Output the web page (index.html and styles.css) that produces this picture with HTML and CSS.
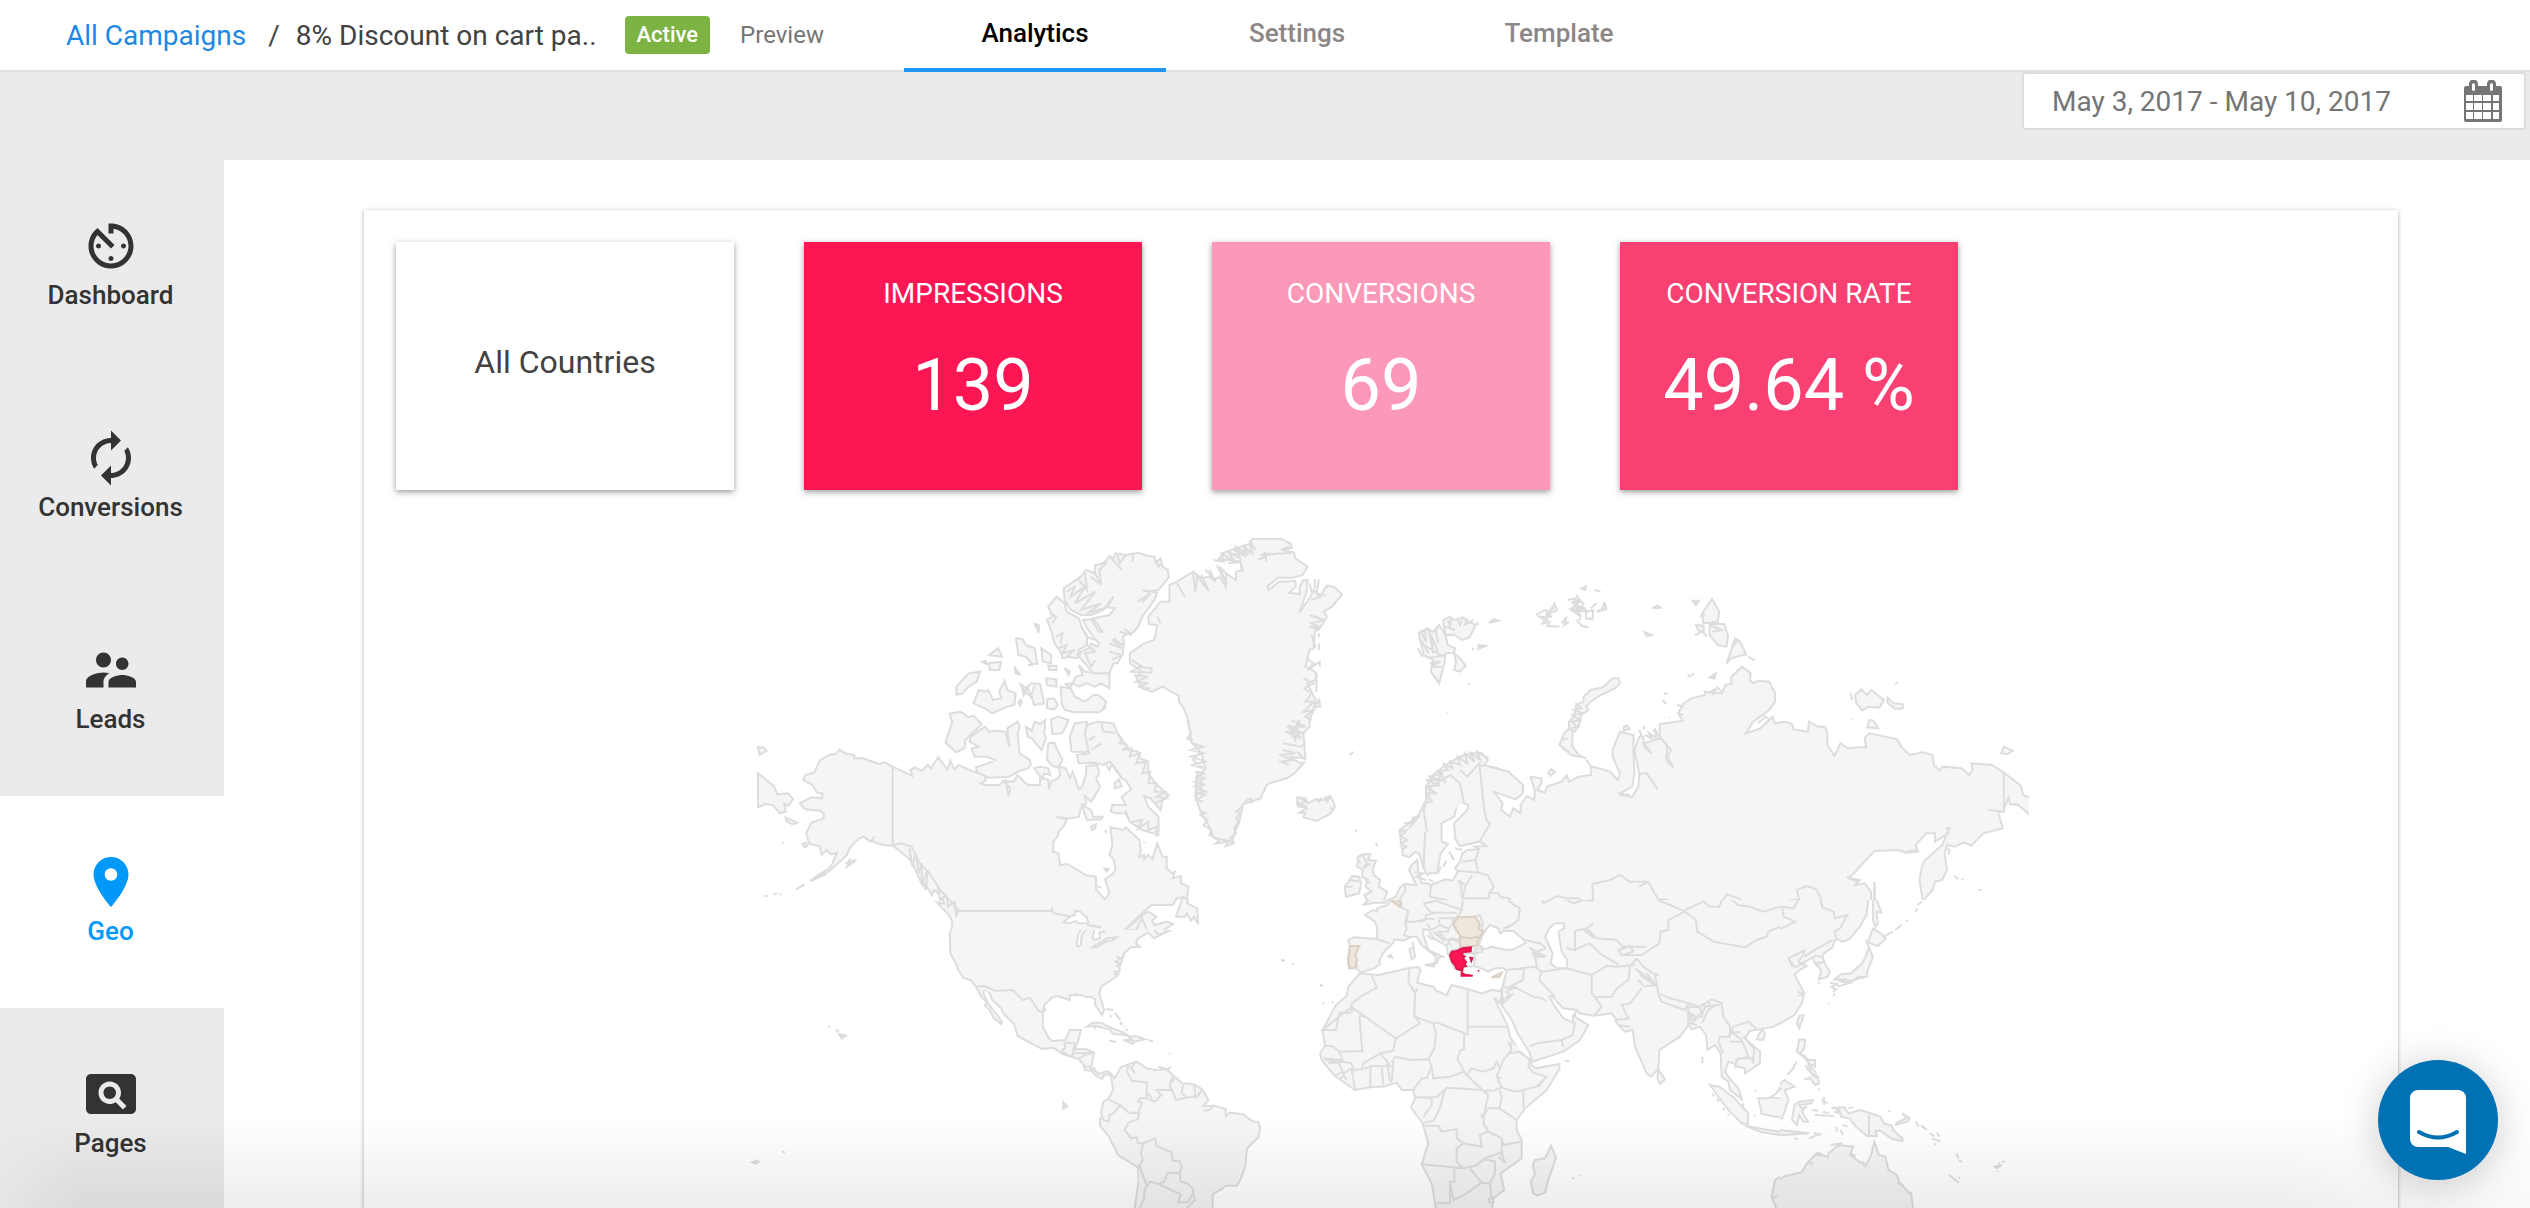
FILE: index.html
```html
<!DOCTYPE html>
<html lang="en">
<head>
<meta charset="utf-8">
<title>Campaign analytics - Geo</title>
<meta name="viewport" content="width=device-width, initial-scale=1">
<link rel="stylesheet" href="styles.css">
</head>
<body>
<div class="app">
  <header class="topbar">
    <div class="crumbs">
      <a class="crumb-link" href="#campaigns">All Campaigns</a>
      <span class="crumb-sep">/</span>
      <span class="crumb-name">8% Discount on cart pa..</span>
      <span class="badge">Active</span>
      <a class="preview" href="#preview">Preview</a>
    </div>
    <nav class="tabs" aria-label="Campaign sections">
      <a class="tab tab-active" href="#analytics">Analytics</a>
      <a class="tab" href="#settings">Settings</a>
      <a class="tab" href="#template">Template</a>
    </nav>
  </header>

  <div class="toolbar">
    <label class="date-range">
      <input class="date-input" type="text" value="May 3, 2017 - May 10, 2017" aria-label="Date range">
      <svg class="calendar" viewBox="0 0 38 42" aria-hidden="true">
        <path fill="#757575" fill-rule="evenodd" d="M2 6H5V4A4 4 0 0 1 14 4V6H23V4A4 4 0 0 1 32 4V6H36A2 2 0 0 1 38 8V40A2 2 0 0 1 36 42H2A2 2 0 0 1 0 40V8A2 2 0 0 1 2 6ZM2 15V21H9V15ZM10 15V21H18V15ZM19 15V21H27V15ZM29 15V21H35V15ZM2 23V30H9V23ZM10 23V30H18V23ZM19 23V30H27V23ZM29 23V30H35V23ZM2 32V39H9V32ZM10 32V39H18V32ZM19 32V39H27V32ZM29 32V39H35V32ZM8 4V10A2 2 0 0 0 11 10V4A2 2 0 0 0 8 4ZM26 4V10A2 2 0 0 0 29 10V4A2 2 0 0 0 26 4Z"/>
      </svg>
    </label>
  </div>

  <div class="body">
    <nav class="sidebar" aria-label="Reports">
      <a class="side-item" href="#dashboard">
        <svg class="side-icon" viewBox="0 0 24 24" aria-hidden="true"><path d="M11 17c0 .55.45 1 1 1s1-.45 1-1-.45-1-1-1-1 .45-1 1zm0-14v4h2V5.08c3.39.49 6 3.39 6 6.92 0 3.87-3.13 7-7 7s-7-3.13-7-7c0-1.68.59-3.22 1.58-4.42L12 13l1.41-1.41-6.8-6.8v.02C4.42 6.45 3 9.05 3 12c0 4.97 4.02 9 9 9 4.97 0 9-4.03 9-9s-4.03-9-9-9h-1zm7 9c0-.55-.45-1-1-1s-1 .45-1 1 .45 1 1 1 1-.45 1-1zM6 12c0 .55.45 1 1 1s1-.45 1-1-.45-1-1-1-1 .45-1 1z"/></svg>
        <span>Dashboard</span>
      </a>
      <a class="side-item" href="#conversions">
        <svg class="side-icon" viewBox="0 0 24 24" aria-hidden="true"><path d="M12 6v3l4-4-4-4v3c-4.42 0-8 3.58-8 8 0 1.57.46 3.03 1.24 4.26L6.7 14.8c-.45-.83-.7-1.79-.7-2.8 0-3.31 2.69-6 6-6zm6.76 1.74L17.3 9.2c.44.84.7 1.79.7 2.8 0 3.31-2.69 6-6 6v-3l-4 4 4 4v-3c4.42 0 8-3.58 8-8 0-1.57-.46-3.03-1.24-4.26z"/></svg>
        <span>Conversions</span>
      </a>
      <a class="side-item" href="#leads">
        <svg class="side-icon" viewBox="0 0 24 24" aria-hidden="true"><path d="M16.5 12c1.38 0 2.49-1.12 2.49-2.5S17.88 7 16.5 7C15.12 7 14 8.12 14 9.5s1.12 2.5 2.5 2.5zM9 11c1.66 0 2.99-1.34 2.99-3S10.66 5 9 5C7.34 5 6 6.34 6 8s1.34 3 3 3zm7.5 3c-1.83 0-5.5.92-5.5 2.75V19h11v-2.25c0-1.83-3.67-2.75-5.5-2.75zM9 13c-2.33 0-7 1.17-7 3.5V19h7v-2.25c0-.85.33-2.34 2.37-3.47C10.5 13.1 9.66 13 9 13z"/></svg>
        <span>Leads</span>
      </a>
      <a class="side-item side-active" href="#geo">
        <svg class="side-icon" viewBox="0 0 24 24" aria-hidden="true"><path d="M12 2C8.13 2 5 5.13 5 9c0 5.25 7 13 7 13s7-7.75 7-13c0-3.87-3.13-7-7-7zm0 9.5c-1.38 0-2.5-1.12-2.5-2.5s1.12-2.5 2.5-2.5 2.5 1.12 2.5 2.5-1.12 2.5-2.5 2.5z"/></svg>
        <span>Geo</span>
      </a>
      <a class="side-item" href="#pages">
        <svg class="side-icon" viewBox="0 0 24 24" aria-hidden="true"><path d="M11.5 9C10.12 9 9 10.12 9 11.5s1.12 2.5 2.5 2.5 2.5-1.12 2.5-2.5S12.88 9 11.5 9zM20 4H4c-1.1 0-2 .9-2 2v12c0 1.1.9 2 2 2h16c1.1 0 2-.9 2-2V6c0-1.1-.9-2-2-2zm-3.21 14.21l-2.91-2.91c-.69.44-1.51.7-2.39.7C9.01 16 7 13.99 7 11.5S9.01 7 11.5 7 16 9.01 16 11.5c0 .88-.26 1.69-.7 2.39l2.91 2.9-1.42 1.42z"/></svg>
        <span>Pages</span>
      </a>
    </nav>

    <main class="content">
      <section class="card">
        <div class="tiles">
          <div class="tile tile-scope">All Countries</div>
          <div class="tile tile-impressions"><span class="tile-label">IMPRESSIONS</span><span class="tile-value">139</span></div>
          <div class="tile tile-conversions"><span class="tile-label">CONVERSIONS</span><span class="tile-value">69</span></div>
          <div class="tile tile-rate"><span class="tile-label">CONVERSION RATE</span><span class="tile-value">49.64 %</span></div>
        </div>

        <svg class="map" viewBox="733 538 1296 670" role="img" aria-label="Conversions by country">
          <!-- North America, Greenland, Iceland -->
          <svg x="740" y="520" width="603" height="410" viewBox="0 0 1477 1230" preserveAspectRatio="none">
            <path d="M505,1300 515,1260 520,1205 512,1185 482,1147 500,1152 495,1130 475,1110 470,1125 445,1075 448,1100 430,1050 418,1020 398,1000 375,977 350,975 328,966 318,955 305,950 292,955 283,965 268,985 262,1005 240,1030 220,1052 172,1083 190,1066 215,1048 225,1035 238,998 222,1003 212,990 200,1005 195,978 170,972 162,940 175,908 205,895 205,880 195,872 160,868 146,850 175,832 200,835 202,820 188,818 178,795 155,780 160,765 182,757 195,722 218,705 235,702 243,688 258,700 280,706 280,715 300,714 340,732 355,727 374,740 422,768 418,750 428,742 445,752 460,735 468,745 485,712 500,735 508,748 515,722 525,748 535,735 575,757 598,762 603,780 590,790 600,795 635,795 650,780 658,828 662,805 645,782 670,785 680,765 700,790 708,795 735,795 735,770 755,780 757,808 762,785 778,775 785,765 780,740 798,745 808,775 815,755 830,808 838,800 848,760 848,738 875,735 880,760 872,775 882,800 868,830 860,845 845,828 848,850 835,865 830,890 812,895 800,895 775,890 800,900 795,915 780,935 780,945 768,965 766,995 780,1000 784,1035 802,1032 848,1066 872,1070 872,1108 893,1138 905,1120 894,1078 915,1060 920,1045 915,1018 905,1005 912,975 910,950 907,922 940,930 945,922 978,960 982,990 978,1010 990,1005 990,1018 1000,1005 1010,1018 1022,970 1035,1010 1045,1010 1045,1045 1058,1060 1065,1055 1060,1075 1080,1068 1080,1090 1098,1100 1095,1135 1070,1135 1060,1155 1008,1155 985,1180 940,1232 965,1208 985,1185 1000,1175 1020,1190 1010,1200 1015,1215 1045,1205 1060,1212 1015,1250 975,1255 970,1300Z"/>
            <path d="M374,740V975L395,970 420,980 440,1030 465,1060 490,1110 535,1170M535,1173H765L763,1162 768,1180 815,1190M850,1215 885,1222M940,1232 970,1230 985,1195 1000,1240M415,985 422,1040 430,1000 438,1060 445,1030 445,1090 460,1050 455,1110 448,1080M485,1100 490,1140 505,1125 510,1160 525,1145 530,1190 535,1165"/>
            <path class="sea" d="M793,1207 808,1190 820,1185 820,1172 835,1175 838,1182 850,1192 853,1210 830,1210 822,1203 805,1210Z"/>
            <path d="M1068,1190 1085,1130 1098,1140 1095,1150 1120,1165 1122,1212 1112,1190 1105,1202 1095,1180 1090,1190Z"/>
            <path d="M44,760 82,797 92,823 118,820 130,837 118,858 108,850 112,875 98,880 80,855 62,852 44,862ZM44,682 57,682 65,692 48,704ZM112,893 140,908 130,913 115,905ZM103,966 107,970M153,972 162,968 165,978 158,982ZM60,1127 68,1129M82,1124 92,1120M97,1122 102,1124M138,1108 158,1093M172,1083 212,1062M258,1030 285,1020 262,1040 270,1015M300,948 320,965 330,950"/>
            <!-- Banks, Victoria and the parallel islands -->
            <path d="M513,581 540,575 560,592 572,587 592,613 552,660 550,684 530,697 503,667 520,607Z"/>
            <path d="M565,650 600,620 610,635 628,632 650,635 660,680 655,625 680,605 685,620 680,640 685,700 710,720 712,735 705,745 680,755 660,770 610,773 580,757 578,742 612,728 625,720 605,710 575,710 567,685 585,680 562,665Z"/>
            <path d="M700,620 715,632 722,605 735,612 748,600 745,640 750,655 738,690 715,655 705,650ZM762,598 780,590 805,600 790,640 765,642ZM755,670 770,668 775,685 790,720 780,742 765,738 752,720ZM720,745 735,740 755,745 760,765 745,760 740,775ZM808,650 820,610 850,605 845,640 855,690 845,697 812,695Z"/>
            <path d="M572,550 585,510 600,515 608,510 620,540 640,535 635,515 648,482 655,510 675,520 672,555 655,560 618,580 600,565ZM530,500 560,460 588,455 580,485 560,500 545,520 530,525ZM610,405 632,385 642,410ZM610,430 640,425 635,450 612,450ZM593,425 602,422 605,432ZM676,355 692,357 700,375 722,385 728,432 715,432 700,410 682,405ZM738,385 762,405 762,430 742,425ZM722,312 732,315 732,338ZM672,440 685,463 675,460ZM705,435 718,436M755,437 775,438 775,450 758,450ZM795,445 808,455 805,465ZM750,475 775,478 775,500 752,495ZM685,490 700,505 715,490 735,492 745,550 720,555 715,530 700,520ZM752,538 770,535 778,555 770,568 752,565ZM682,545 688,540 690,550 685,557ZM690,500 695,525 705,500 712,530 722,495"/>
            <path d="M785,500 810,505 820,530 845,545 865,525 878,525 897,545 890,565 897,560 880,577 820,577 795,570 788,550Z"/>
            <path d="M798,492 815,490 822,470 840,465 830,435 845,455 875,460 905,458 905,505 885,490 868,500 850,490 830,500 815,490 808,505Z"/>
            <!-- Ellesmere and Axel Heiberg -->
            <path d="M793,205 835,170 848,150 868,160 870,135 890,130 905,108 915,115 920,100 945,105 975,98 1000,108 1015,110 1018,128 1030,115 1035,140 1048,150 1050,172 1025,210 1000,215 985,210 1022,218 1015,240 985,290 975,320 965,335 945,345 938,350 940,370 938,400 925,430 915,430 905,460 865,460 845,430 830,410 835,395 855,385 860,370 875,380 880,370 865,350 850,325 840,300 860,298 880,335 888,335 865,295 905,285 918,265 900,262 915,230 890,270 860,285 835,285 810,270 795,240Z"/>
            <path d="M755,260 775,230 795,250 800,275 830,295 840,330 850,345 850,375 830,390 825,415 805,410 790,415 785,395 770,370 762,330 752,300 765,290Z"/>
            <path class="rough" d="M868,155 885,195 880,150 900,125M905,108 935,150M925,105 930,130 945,105M800,215 820,200 810,230 845,200 820,250 870,215 835,270 885,250 850,280 900,262M830,180 850,210 845,160M860,170 878,190M962,98V125M975,245 1005,220 985,248M1020,120 1025,140 1032,130M940,325 960,345 930,335M915,355 938,375 912,360 935,385 905,370M905,395 935,405 910,420M850,375 870,395 845,400 860,440 870,420M760,280 775,290 765,310M775,350 790,340 785,370M780,385 800,375 790,400 820,390 800,410M835,320 850,350 870,360"/>
            <!-- Baffin Island -->
            <path d="M845,640 850,615 875,605 915,610 925,640 935,655 930,670 945,672 950,690 975,695 980,715 1000,725 1000,760 1015,785 1035,810 1050,825 1035,840 1030,870 1005,835 990,828 1000,860 1025,890 1025,945 985,930 955,905 945,880 920,880 908,875 912,855 945,855 935,830 958,808 945,780 935,775 920,745 905,725 890,735 870,728 830,730 825,705 855,700Z"/>
            <path class="rough" d="M885,610 890,635 920,638M925,645 950,680 935,690 960,685 955,710 980,700 970,730 995,725 985,760 1005,755 1000,790 1020,790 1015,815 1045,815 1020,830 1045,835 1015,850M990,830 1010,835M960,905 985,900 975,925 1000,905 1000,930 1020,920 1020,950M945,870 950,895M855,660 870,650M860,690 885,670M895,730 905,750 910,730 925,760"/>
            <path d="M918,790 928,778 935,800 918,805ZM838,855 860,870 865,890 888,890 885,898 850,900 845,885ZM860,920 872,913 870,925 862,930ZM895,930 897,940M990,965V970M893,1045 903,1048 897,1055ZM873,1098 885,1103"/>
            <!-- Greenland -->
            <path d="M1255,56 1325,56 1350,72 1352,84 1330,90 1357,98 1360,115 1390,140 1378,165 1355,173 1318,173 1293,198 1295,210 1320,185 1360,183 1362,200 1345,218 1372,222 1370,205 1378,182 1390,180 1388,215 1370,278 1395,235 1405,210 1420,230 1438,197 1455,200 1475,223 1450,260 1430,275 1438,290 1420,325 1408,335 1405,385 1395,390 1385,440 1402,450 1412,460 1410,480 1390,490 1410,540 1405,570 1395,600 1395,620 1380,640 1385,715 1345,710 1370,728 1382,728 1358,760 1340,775 1300,788 1290,795 1275,835 1232,852 1222,910 1212,935 1205,970 1195,962 1162,955 1145,910 1130,880 1115,830 1118,775 1140,745 1130,700 1105,665 1098,600 1085,560 1075,545 1075,528 1035,500 1010,515 985,505 970,470 985,455 955,430 955,400 990,370 1015,360 1022,315 1002,312 1000,290 1030,245 1052,245 1052,195 1070,185 1110,155 1130,175 1150,170 1160,180 1175,170 1190,200 1190,160 1215,180 1215,155 1230,150 1225,125 1200,120 1172,118 1185,98 1215,85 1250,70Z"/>
            <path class="rough" d="M1070,190 1090,230M1110,160 1115,215 1120,170 1148,212 1130,165M1140,148 1165,185 1150,150M1168,135 1192,195 1175,140 1195,165M1160,120 1185,125 1180,100 1215,130 1195,95 1225,115 1215,80 1245,105 1230,75 1255,100 1248,62 1262,90M1195,130 1225,125 1232,155M1200,105 1250,95 1210,90 1240,110M1270,120 1300,100 1275,105 1350,98M1285,95 1290,125M1325,90 1345,80M1395,190 1400,215M1408,178V205M1418,178 1412,220 1430,225 1400,240M1395,285 1430,300 1400,310 1420,320 1395,320 1420,330M1418,340V352M1400,345 1410,385M1418,370V390M1388,415 1405,430 1390,450 1420,425V440M1380,475 1405,490 1382,505 1400,520 1385,545 1405,545 1380,575 1405,570 1385,590 1400,600M1412,465V515M1418,540 1410,560 1422,560ZM1350,600 1385,620 1340,620 1380,640 1335,635 1375,655 1345,615 1360,660 1370,600 1350,650M1330,670 1375,680 1385,670M1330,690 1360,700 1325,705 1350,720 1325,725 1345,735M1365,695 1385,720M960,420 985,440 955,455 1008,458 1008,445 975,440M965,465 1000,470 970,485 1000,490 975,500 1005,505M1022,290 1030,310M1095,600 1105,640 1095,655 1110,660M1105,670 1135,680 1105,690 1135,700 1105,710 1140,725 1105,735 1135,745 1110,720 1125,700M1115,755 1140,760 1115,770 1142,775 1115,785 1140,795 1115,800 1142,815 1115,820 1138,825 1118,840 1135,845M1120,760V830M1130,760V820M1125,870 1140,880 1128,885 1145,900 1135,915 1155,930 1150,945 1175,960 1165,970 1195,965 1190,978 1210,970 1200,955 1215,940 1210,925 1222,905 1215,895 1225,880 1215,875 1230,860M1235,845 1250,835 1255,850"/>
            <!-- Iceland -->
            <path d="M1365,832 1385,835 1390,850 1410,838 1430,840 1445,828 1455,850 1457,862 1445,882 1412,903 1380,892 1385,878 1370,878 1388,865 1365,855Z"/>
            <path class="rough" d="M1368,832 1388,845 1368,850 1388,860 1365,860M1412,833 1418,845 1425,833M1432,828 1438,845 1448,828M1445,862 1455,868"/>
            <path d="M1495,705 1502,695M1510,930 1514,934"/>
          </svg>

          <!-- Scandinavia, Russia and the Arctic islands -->
          <svg x="1343" y="520" width="686" height="380" viewBox="88.7 0 1415.3 1140" preserveAspectRatio="none">
            <path d="M150,1300 178,1142 198,1130 205,1105 215,1092 240,1095 225,1050 230,1035 242,1020 244,1055 250,1090 262,1090 270,1095 300,1078 315,1082 325,1055 320,1045 330,1025 335,1000 345,990 368,988 360,980 385,978 370,965 330,978 320,955 318,910 345,870 348,855 335,848 325,852 318,890 292,910 292,965 305,972 290,1000 285,1040 282,1060 268,1060 263,1065 255,1045 248,1010 245,1000 238,995 225,1012 212,1005 208,965 205,930 225,910 245,885 260,840 260,800 278,760 300,735 330,710 355,700 375,700 388,720 380,735 430,755 460,795 460,820 445,838 400,815 418,850 415,870 433,890 440,865 455,880 455,855 468,828 483,840 485,815 480,790 475,770 498,775 498,790 490,810 505,818 510,800 540,785 550,765 555,785 575,770 600,765 600,738 640,755 655,780 660,760 645,710 645,690 660,635 688,645 688,700 690,760 685,800 660,820 685,832 698,800 700,760 690,690 700,650 708,650 710,680 725,700 710,670 730,660 745,655 758,680 755,720 770,742 758,712 765,690 742,650 742,612 790,602 780,580 792,550 808,535 835,525 835,515 870,520 878,495 890,492 890,470 912,440 930,460 928,480 935,490 945,482 968,485 980,520 980,545 968,570 935,605 920,640 950,625 975,590 980,610 1000,605 1015,612 1018,628 1048,635 1050,605 1068,620 1083,620 1088,640 1088,675 1103,708 1115,670 1130,685 1155,682 1168,682 1165,652 1175,640 1232,658 1240,680 1258,705 1285,697 1305,705 1308,735 1320,752 1325,740 1365,745 1380,765 1388,750 1385,730 1428,735 1452,758 1487,797 1492,825 1510,835 1510,890 1482,855 1465,852 1462,832 1450,875 1440,875 1450,925 1410,940 1385,977 1370,967 1350,980 1335,975 1330,1000 1335,1050 1325,1080 1310,1085 1305,1110 1285,1143 1278,1080 1283,1040 1290,1020 1325,975 1340,925 1335,925 1338,940 1310,965 1310,940 1292,940 1270,975 1275,995 1250,998 1235,990 1185,993 1133,1075 1155,1080 1145,1095 1165,1090 1178,1115 1178,1150 1165,1300Z"/>
            <path d="M1452,758V875L1420,870M285,1060 290,1040M262,935 255,870 270,800 310,765 330,790 338,845M255,1045 258,935M330,750 345,770 370,730 375,800 380,870 385,900 392,912 370,965M370,735 380,740M370,985 362,1020 335,1025M362,1020 368,1058 325,1052M368,1058 387,1065 400,1100 390,1120 408,1120 415,1132 432,1135 440,1148M390,1120V1135H335L342,1095 325,1082M342,1095 355,1065M335,1135 330,1080M270,1095 268,1130 335,1150M215,1092 218,1110 205,1140M500,1150 530,1128 550,1135 575,1135 580,1145 605,1140 603,1092 640,1080 660,1065 680,1085 718,1085 740,1140 755,1138 765,1150 800,1160 830,1145 870,1150 880,1123 905,1135 920,1150M700,1100 718,1085M1000,1165 1005,1155M1010,1140H1030L1025,1110 1045,1098 1065,1108 1080,1150 1110,1170"/>
            <path class="rough" d="M205,935 220,930 208,950 222,960 208,970 220,980 210,990M215,910 235,905 225,925 245,890 230,895M255,850 272,845 262,820 280,820 262,800 285,795 260,780 290,780 265,770 295,760 280,755 305,750 295,730 315,745 310,725 330,735 325,710 345,730 340,700 360,725 350,695 372,720 365,695 388,715M285,800 290,755 300,790M390,740 410,745M840,520 860,505 850,525M860,500 870,515M778,555 790,560M780,580 790,585M655,820 680,825 660,828M945,610 960,590 970,600 955,585M575,705 590,715M590,718 600,740M725,780 738,808 715,760 700,762M1250,995 1275,990M1335,985 1340,990 1338,1005"/>
            <!-- Novaya Zemlya -->
            <path d="M645,475 657,475 660,490 650,505 620,525 600,545 590,560 595,570 580,585 575,620 562,640 562,680 578,710 560,705 548,690 535,675 545,640 555,625 555,605 565,590 570,555 585,545 585,530 600,510 625,502Z"/>
            <path class="rough" d="M568,550 580,565 565,570 585,580 562,585 578,600 560,605 572,620 555,628 570,635M540,660 552,655M542,685 555,695"/>
            <!-- Svalbard -->
            <path d="M295,302 308,290 320,300 335,292 345,302 362,315 350,352 335,360 318,345 300,345ZM245,340 262,325 275,335 287,315 300,345 305,375 320,385 318,398 300,400 298,430 287,490 270,455 275,420 255,405ZM318,400 330,415 342,437 330,455 318,450 322,425Z"/>
            <path class="rough" d="M248,330 260,365 258,330M265,325 275,400 270,345 285,395M250,360 265,400 255,375 290,405M262,415 300,405M268,430 290,425 270,440 292,440M243,385 253,412M305,300 310,320 312,290M325,300 330,315 335,298M345,295 340,315 358,300M300,320 320,330M366,305V315M280,330 285,370"/>
            <path class="dot" d="M390,308 400,297 410,302ZM368,375 383,378 368,387ZM358,383 356,391M347,490 349,496M302,579 304,581M103,705 110,695M114,929 118,934M157,968 159,978M727,265 738,256 744,263ZM711,336 725,345 715,348ZM810,242 823,242 817,255ZM845,473 858,460 855,475ZM800,462 805,472M812,458 808,468M750,520 760,521M748,540 755,552M762,592V595M1228,492 1234,486M1137,595 1139,598M1136,518 1139,540M925,410 935,420M935,415 937,422"/>
            <!-- Franz Josef Land and Severnaya Zemlya -->
            <path class="rough" d="M487,285 505,270 515,275 525,250 530,270 510,285 520,290 495,290 505,300 500,310 515,305 510,318 535,320M490,288 510,300 508,280 525,262M540,310 550,290 545,315 555,305M552,240 570,235 560,250 580,240 565,260 590,265 560,270 595,275 565,250 580,290 555,265M570,225 580,245M565,235 585,250 575,280 560,262M580,205 590,200 588,210ZM608,210 620,215M590,275 605,270 603,298 590,295ZM600,265 612,250M612,275 625,265 628,245 632,268ZM570,300 582,318 595,322M575,295 580,300"/>
            <path d="M850,237 865,275 862,305 832,310 830,280ZM845,312 875,312 883,345 880,380 862,375 845,345ZM898,355 908,365 920,403 890,415 880,430ZM817,315 833,318 833,335 822,332Z"/>
            <path class="rough" d="M845,315 870,330 850,335M815,345 830,335 840,350M825,290 835,285M890,380 905,360"/>
            <!-- New Siberian and Wrangel islands -->
            <path d="M1145,525 1158,508 1170,525 1178,510 1205,540 1195,563 1172,560 1160,572 1148,550ZM1212,533 1225,550 1245,553 1243,565 1228,567 1212,548ZM1175,600 1183,602 1193,625 1170,622ZM1447,700 1452,680 1470,692 1460,702ZM512,758 518,747 526,755 516,767ZM668,620 675,617 680,627 668,632Z"/>
            <path class="rough" d="M700,630 705,650M712,645 725,655 720,640 735,655 732,625 740,650M710,618V628M728,630 738,640"/>
            <!-- Britain, Ireland, Denmark -->
            <path d="M120,1010 130,1003 145,1003 140,1020 157,1022 150,1045 152,1065 165,1080 163,1100 180,1115 175,1135 160,1160 120,1160 138,1140 133,1125 148,1115 135,1100 140,1080 128,1070 130,1050 118,1040ZM95,1130 92,1100 100,1085 108,1068 122,1070 126,1090 122,1120Z"/>
            <path class="rough" d="M118,1012 125,1030M128,1005 138,1030 130,1045 145,1030M92,1100H108M102,1080 122,1085M135,1080 145,1090M236,1055 255,1060 240,1070 260,1080M265,1078 275,1085M295,1040 302,1022M312,1010 318,1020 308,995M320,985 335,990M1128,1070 1150,1085"/>
            <path d="M1185,1085 1187,1150 1198,1180 1180,1300ZM1350,1067 1358,1078M1365,1075 1368,1080M1400,1110H1406M1338,1000 1340,996"/>
          </svg>

          <!-- USA, Central and South America -->
          <svg x="740" y="930" width="560" height="278" viewBox="0 210 1372 834" preserveAspectRatio="none">
            <path d="M515,150 518,190 514,225 515,280 530,312 533,325 547,353 565,360 578,380 592,412 605,425 600,437 612,450 622,475 640,492 642,485 628,462 608,430 596,400 598,386 610,395 618,420 640,445 645,460 672,492 680,528 740,567 768,563 790,582 830,597 843,615 845,630 862,632 870,645 887,658 890,648 903,640 910,655 914,690 902,718 890,725 885,758 892,762 882,775 882,797 903,828 927,886 975,922 977,960 965,1060 1158,1060 1158,1003 1192,977 1217,977 1225,962 1238,920 1242,866 1270,832 1275,805 1270,787 1255,783 1232,763 1200,758 1190,768 1190,747 1163,737 1135,738 1148,720 1132,688 1113,673 1083,670 1060,645 1045,627 1020,630 995,625 983,613 970,605 933,622 918,655 908,640 900,633 878,642 868,628 860,625 867,578 848,567 820,568 828,545 835,510 808,510 797,540 765,543 757,535 742,500 742,460 745,435 765,412 778,408 808,420 808,406 838,405 848,412 860,410 870,418 870,435 887,465 892,450 880,400 885,380 922,350 918,335 930,335 930,320 942,278 958,262 980,260 970,250 975,235 1000,218 1015,235 1060,205 1070,150Z"/>
            <path d="M578,380 597,378 628,393 668,390 693,420 710,413 732,453 745,458M790,582 790,570 797,565 795,548 820,548M820,548 815,585M790,575 808,590 820,580 865,578M830,597 845,585 867,578M840,620 860,620M862,632 870,622M890,640V655M952,612 948,635 960,662 998,668 995,715M968,605 960,625 965,638M995,715 980,715 975,725 985,728 975,758 952,758 932,735 902,718M932,735 915,760 905,765 903,785 890,780 885,758M952,758 978,760 975,778 952,787 943,810 958,835 972,832 975,850 988,850 1017,835 1020,858 1057,877 1060,903 1077,903 1082,922 1077,938 1047,940 1040,965 1025,972 1005,965 997,978 980,920M988,850 982,880 987,900 975,922M977,915 997,978 990,995 990,1015 978,1050M1025,972 1080,1003 1073,1027 1097,1027 1110,1000V988L1097,970 1080,965 1077,938M1110,1000 1115,1020 1095,1044M995,715 1017,725 1032,705 1020,690 1055,690 1053,672 1060,650M1055,680 1068,720 1095,712 1082,700 1085,675M1095,712 1120,710 1132,688M1113,675 1115,710M1055,670 1065,655M998,700 1010,715"/>
            <path class="sea" d="M828,260 825,255 828,225 838,205 852,203 837,225 835,255ZM857,193 885,200 893,215 880,217 882,235 868,240 863,232 868,215ZM863,262 900,235 922,232 915,240 895,245 875,262Z"/>
            <path class="rough" d="M922,290 932,295 920,305 932,312 920,320M918,340 930,345M745,435 748,455M823,400V408M1015,210 1025,225 1060,208M955,620 968,640M1160,738 1150,750 1135,752"/>
            <path d="M850,500 862,488 885,488 912,505 940,518 948,525 915,522 905,508 870,497ZM940,540 960,540 952,530 970,528 992,538 965,545 962,552ZM905,542 922,546M1000,540 1012,545M866,504 872,503M897,448 915,449M908,465V473M918,458 932,480M932,485 935,495M941,497 943,499M944,508 950,511M1052,580V583M1025,620 1040,625M1045,632 1055,620"/>
            <path class="dot" d="M792,727 802,738 792,746ZM243,522 259,527 249,536ZM235,509 242,515M216,499 221,500M30,907 38,902 46,905 40,911ZM104,874 110,878"/>
            <path class="dot dot-visited" d="M1326,300 1334,302M1353,312 1356,314"/>
          </svg>

          <!-- Europe, Africa, Middle East and South Asia -->
          <svg x="1300" y="900" width="480" height="308" viewBox="0 120 1440 924" preserveAspectRatio="none">
            <path d="M262,100 270,120 262,135 232,145 232,155 218,150 195,165 225,185 232,205 230,237 162,232 145,240 150,258 143,300 148,325 168,325 183,337 222,325 240,312 238,300 252,275 280,248 282,238 310,242 335,230 350,230 365,255 408,290 405,308 410,310 418,292 428,290 385,270 370,225 370,207 385,210 400,235 440,258 443,280 452,300 462,325 485,332 497,310 490,285 512,275 527,282 520,285 525,300 520,318 545,325 565,335 585,325 612,325 620,335 612,360 605,395 598,410 605,435 637,482 650,515 690,580 697,605 790,575 840,540 865,495 825,470 828,455 818,470 820,490 790,475 765,440 748,410 755,408 790,445 832,450 838,460 882,467 935,460 950,480 945,482 955,495 975,515 998,510 1005,560 1040,640 1052,650 1075,628 1078,570 1140,530 1165,495 1175,508 1200,500 1218,525 1222,570 1245,555 1262,580 1265,650 1285,665 1290,690 1325,718 1315,685 1300,668 1285,650 1275,635 1285,605 1300,610 1312,620 1335,625 1335,640 1380,610 1380,575 1335,535 1350,512 1380,508 1420,500 1480,470 1500,430 1540,400 1540,100Z"/>
            <path d="M180,340 235,345 330,323 355,322 362,330 355,350 352,368 400,380 408,392 440,405 455,375 505,388 545,400 575,390 600,393 607,400 600,430 582,412 605,460 622,495 630,530 655,570 690,600 695,615 708,625 778,612 778,628 740,690 675,745 650,780 650,810 665,840 665,895 602,940 612,990 580,1015 575,1060 410,1060 395,970 365,913 385,850 368,790 333,742 345,715 340,690 305,690 290,668 250,680 220,680 165,690 105,648 65,600 60,580 75,558 68,510 108,435 140,408 145,380Z"/>
            <path class="sea" d="M537,255 545,230 558,208 570,195 595,205 600,220 612,212 640,213 672,240 675,250 640,268 618,270 575,260 555,268ZM735,230 748,205 765,190 792,190 792,205 775,215 785,275 802,300 800,325 770,325 752,310 758,280 740,240ZM610,205 635,195 630,200ZM527,268 548,268 545,276 525,278Z"/>
            <!-- African borders -->
            <path d="M215,345 230,383 190,405 155,430V440L68,510H108L118,458H153M153,440 273,525 287,535 360,490 343,468 345,400 325,365 328,325M345,400 352,385M345,470 400,490 408,487 503,523V388M503,500H625M155,440V458M178,468H190M178,468 187,573 118,575 95,558 75,558M118,575 128,600 68,595M287,535 280,572 240,580 190,610 185,628 160,630 155,610 128,605M400,490 408,520 403,565 385,598 330,600 285,590 275,610M240,580 262,605 270,618 215,618 190,628M212,618 210,680M245,618 250,675M262,610 270,665M280,605 275,665M385,598 395,620 380,655 365,655 340,690M492,523V568L480,572 472,595 492,635 450,650 400,655 395,620M492,635 500,645 515,625 550,635 580,625 590,605 600,625 590,650 605,655M625,545 635,570 610,600 600,625M635,545 630,580 658,575 690,600M690,600 685,620 700,638 740,650 710,680 670,690 645,695 605,682 590,650M740,650 715,680M605,682 580,692 550,692 500,645M550,690 440,683 410,712H345M670,690V745M600,690 605,715 598,745 650,780M598,745 555,745 565,705 550,692M555,745 550,790 565,815 605,835 610,855 662,845M440,683 430,705 420,745 400,782 368,790M345,712 395,715 395,735 370,770M368,797 415,797 425,815 470,808V835L490,850 545,860 540,825 565,815M490,850 470,865V905L490,925 365,913M490,925 525,918 555,895 610,875M525,918 555,898 585,905V940L570,970 545,968 510,925M490,920 463,925V965H450V1030L410,1030M450,965 460,1020 500,1000 545,968M570,970 575,1015M565,1020 575,1010 580,1025 570,1028ZM605,835 605,880 615,910 595,890M75,600 115,605 130,640 155,625 165,690M105,648 125,635 140,660M120,655 135,645M545,770 562,750M545,760V775M85,610 130,605"/>
            <!-- European borders -->
            <path d="M230,237 268,250M150,258 178,258 165,285 172,325M270,120 300,140 325,152 315,185 320,205 312,225 330,232M305,100 303,140M325,152 320,185 345,185 370,180 375,175 405,178M370,130 390,155 405,158 470,158M395,90 400,120 485,150 490,105 560,115 575,105M370,130 400,125M485,150 480,160 465,175 415,175M405,158 378,165 375,180 355,185M415,178 420,195 395,210 380,190M420,195 445,205 460,190 455,170M445,205 445,215 415,215 440,240 455,235 478,240 480,215 460,200M440,258 450,240 463,240 480,250 480,265 455,270M455,270 450,280M513,262 530,258 537,262M460,180 480,170M525,170 540,165 550,195 535,200M600,100 635,130 660,145 655,180 635,195 610,205M672,240 720,250 738,265M688,262 710,275 738,265M690,262 705,280 710,320 620,330M705,320 725,335 718,360 765,410M672,325 668,360 620,385 610,378 615,352M620,385 640,380 700,410 725,415 740,425M610,418 630,405 620,395 650,380M605,395 610,430 640,400M603,385 608,430M705,275 740,290M695,280 715,290"/>
            <!-- Asian borders -->
            <path d="M720,100 730,130 770,110 800,120 820,130 850,120 880,122M870,60 885,115 870,120M1075,120 1155,155 1105,180 1105,210 1082,215 1078,250 1025,285 960,285M1155,150 1210,125 1230,140 1258,140 1272,103 1315,135 1350,140 1390,155 1440,140M1155,155 1188,180 1192,215 1240,245 1335,262 1370,240 1400,230 1405,215 1440,200M825,212 860,205 890,235 950,240 968,260 1040,260M825,212V270L800,265M825,268 870,250 905,285 950,310 955,320M955,270 990,258 1000,275 965,285ZM860,205 880,190M845,205 885,235M725,335 800,325 875,345V400L885,412 935,410 950,385 985,360 990,320 1010,295M885,412 905,440 882,467M875,345 920,318 955,320 1005,315M1010,295 1030,320 1065,345 1075,400 1110,415 1165,430 1200,440 1235,418 1265,430 1270,470 1290,500M1025,385 990,430 965,435 985,475 950,480M1075,405 1085,425 1155,450 1165,432M1165,430V495M1170,440 1200,442 1205,458 1190,470 1160,465M1165,480 1205,470 1215,440 1260,435M1205,490 1225,450 1240,440M1290,500 1300,520 1325,540 1345,590 1310,600 1305,625M1300,500 1345,485 1370,508M1290,500 1290,530 1260,530 1255,545 1270,580M1290,545 1325,545M1310,595 1355,595 1360,610M790,475 825,490 818,525 785,540 710,550 690,560M785,540 790,560M1030,380 1065,375M1300,500 1290,520 1320,515M1330,530 1362,565 1360,610"/>
            <path class="rough" d="M1005,325 1025,340M1015,335 1060,365 1040,340 1070,380 1020,345M1065,340 1075,348M1015,360 1030,375M1205,430 1215,440M1225,428 1232,434M1160,455 1180,465 1165,470 1185,480 1170,490 1190,495M955,495 990,500M400,215 430,240 410,220 435,245M380,225 400,240M450,250 455,260M695,270 720,285 700,290 735,290M540,190 550,215M290,105 300,100M195,65 215,100 205,60"/>
            <!-- Aegean Sea -->
            <path class="sea" d="M488,284 512,278 524,284 522,318 500,320 497,305Z"/>
            <!-- Countries with campaign traffic -->
            <path class="visited" d="M150,258 178,258 165,285 172,297 165,323 148,325 145,300ZM275,122 290,117 303,130 300,140ZM460,190 475,172 525,170 537,188V208L550,215 535,238 530,257 480,260 482,228 470,212ZM482,230 510,235 535,230M575,352 605,338 598,352Z"/>
            <path class="dot dot-visited" d="M60,376 68,377"/>
            <path class="top-country" d="M450,285 456,275 470,273 488,265 513,262 512,274 492,276 484,282 494,290 488,294 498,306 494,312 498,318 488,320 487,332 470,327 464,314 456,305ZM485,339 495,344 518,347 485,347ZM511,293 517,294 514,302ZM534,331 537,334"/>
            <!-- Islands -->
            <path d="M185,60 200,80 180,110 200,120 212,115 188,135 222,128 255,128 270,108 262,100 250,60ZM328,268 340,262 345,290 335,298ZM337,245 340,258M375,315 405,310 402,320ZM265,290 272,285 277,293ZM753,857 768,893 745,960 735,998 712,1006 700,1000 692,965 705,942 698,915 705,900 735,895ZM1075,628 1095,658 1080,672 1072,655ZM1208,590 1207,610M795,602 808,603M1230,675 1258,680 1300,712 1345,760 1343,795 1325,790 1290,755 1262,720ZM1335,797 1375,805 1440,815 1440,825 1385,817ZM1375,715 1405,715 1430,700 1440,680 1455,662 1480,680 1465,700 1470,735 1450,770 1425,770 1385,762ZM1405,712 1440,715 1460,690M1385,508 1395,520 1390,540 1370,538ZM1330,730V740M1345,760V765M1362,765 1365,768M1365,690 1368,694M1238,702 1243,708M1250,718 1258,725M1268,745 1275,750M1283,762 1287,767"/>
            <path class="dot" d="M68,428 72,432M95,428 100,426M817,952 822,957M839,945 843,948"/>
            <path d="M1415,1010 1425,960 1440,950 1500,935 1500,1060 1435,1060ZM1418,1020 1430,1005"/>
          </svg>

          <!-- East Asia, Indonesia and Australia -->
          <svg x="1780" y="900" width="249" height="308" viewBox="40.7 120 507 924" preserveAspectRatio="none">
            <path d="M-20,100 222,100 217,165 203,200 182,238 167,245 155,235 150,250 148,262 130,280 127,290 132,310 142,335 138,350 120,358 125,330 115,315 120,308 112,310 107,292 75,320 65,318 58,295 90,272 88,285 78,305 95,318 80,330 70,345 80,370 90,400 85,430 70,465 30,500 -20,507Z"/>
            <path d="M155,235 152,215 163,205 178,165 152,175 150,155 127,142 118,95M75,100 78,120 68,145 45,140 0,150M45,140 48,170 72,185 52,200 20,220 0,250M90,290 120,262 148,240M110,288 128,290M115,312 132,305M60,300 70,320"/>
            <path d="M230,90 240,130 247,158 237,155 240,190 235,200 230,180ZM230,205 250,225 256,235 240,258 220,248ZM222,262 230,292 218,335 218,350 205,352 190,362 152,358 165,343 185,340 208,310 215,290ZM215,240 222,262"/>
            <path class="rough" d="M142,368 160,372 145,380 155,388 148,395M160,362 180,370 158,380M170,355 185,368 200,350 212,355M75,395 90,400 78,408M250,232 270,215M275,210 288,195M297,185 301,180M316,155 320,145M320,135 330,125M150,400 152,408M140,428V432M128,452V454M118,368 122,370"/>
            <path d="M80,468 89,465 80,505 75,490ZM80,538 92,540 90,565 82,580 100,600 112,600 112,620 100,610 88,590 75,575ZM72,610 68,625 55,645M105,640 118,650 120,670 112,675 102,655 90,658"/>
            <path class="rough" d="M90,585 98,605M92,615 105,640 98,610 115,640M95,625 115,655M75,605 72,612M120,685V690"/>
            <path d="M0,710 20,700 50,660 70,680 50,690 58,720 45,775 0,762ZM15,715 45,685M70,735 80,725 108,720 105,730 80,735 85,745 95,740 85,755 98,785 88,785 80,765 75,795 65,780ZM0,803 30,808 100,820 50,825 0,817ZM100,835 125,820M70,835 78,838"/>
            <path class="rough" d="M130,710V735M125,720 138,730M120,690V692M105,750 118,752M112,765 150,768M128,755 140,760M145,745 175,745M150,740 165,760 150,755M180,745 190,742M155,800 157,815M168,795 178,800M165,810 168,825M110,818 122,825"/>
            <path d="M160,742 172,742 180,760 205,750 245,770 252,790 268,797 272,812 290,835 290,843 270,838 245,812 235,812 238,828 218,828 195,800 182,775 165,770ZM222,765V825M275,795 300,785 305,775 290,760 298,775 282,785ZM318,785 322,800M328,797 340,810M345,820 355,828M350,835 368,845M355,850 358,855M360,818 365,830M262,752 266,756"/>
            <path d="M25,1060 22,1005 32,965 52,948 85,937 98,905 118,878 138,892 140,880 160,855 190,860 183,885 215,918 225,890 233,845 242,885 255,890 262,930 278,945 285,970 308,1005 313,1060Z"/>
            <path class="rough" d="M98,905 108,912M110,882 125,888M145,855 165,850 160,862M185,880 195,890M280,970 292,975M300,1000 310,1000M207,905 213,910"/>
            <path class="dot" d="M400,880 404,895M405,900 411,907M385,945 405,968M405,952 408,955M478,920 492,915 482,925ZM485,908 488,912M493,903 498,908M483,933 485,935"/>
          </svg>
        </svg>
      </section>
    </main>
  </div>
</div>

<div class="bottom-fade"></div>
<button class="chat" type="button" aria-label="Open chat">
  <svg viewBox="0 0 120 120" aria-hidden="true">
    <path fill="#fff" d="M40 30H80A8 8 0 0 1 88 38V94L70 87H40A8 8 0 0 1 32 79V38A8 8 0 0 1 40 30Z"/>
    <path fill="none" stroke="#0071b2" stroke-width="4" stroke-linecap="round" d="M41 72Q60 83 79 72"/>
  </svg>
</button>
</body>
</html>
```
FILE: styles.css
```css
* {
  box-sizing: border-box;
}

body {
  margin: 0;
  font-family: Roboto, "Liberation Sans", sans-serif;
  color: #424242;
  background: #fff;
}

a {
  color: inherit;
  text-decoration: none;
}

.app {
  display: flex;
  flex-direction: column;
  height: 100vh;
}

/* Top bar */
.topbar {
  display: flex;
  flex: none;
  height: 72px;
  border-bottom: 2px solid #dfdfdf;
}

.crumbs {
  display: flex;
  flex: 0 0 904px;
  align-items: center;
  height: 70px;
  padding-left: 66px;
  font-size: 28px;
  white-space: nowrap;
}

.crumb-link {
  color: #1e88e5;
}

.crumb-sep {
  margin: 0 16px 0 22px;
}

.badge {
  margin-left: 28px;
  padding: 0 12px;
  border-radius: 4px;
  background: #7cb342;
  color: #fff;
  font-size: 22px;
  font-weight: 500;
  line-height: 38px;
}

.preview {
  margin-left: 30px;
  color: #757575;
  font-size: 24px;
}

.tabs {
  display: flex;
  height: 72px;
}

.tab {
  width: 262px;
  border-bottom: 4px solid transparent;
  color: #8d8686;
  font-size: 26px;
  font-weight: 500;
  line-height: 66px;
  text-align: center;
}

.tab-active {
  border-bottom-color: #2196f3;
  color: #000;
}

/* Date bar */
.toolbar {
  display: flex;
  flex: none;
  justify-content: flex-end;
  align-items: flex-start;
  height: 88px;
  padding-right: 4px;
  background: #ebebeb;
}

.date-range {
  display: flex;
  align-items: center;
  width: 504px;
  height: 58px;
  padding: 0 22px 0 28px;
  border: 2px solid #ddd;
  border-radius: 4px;
  background: #fff;
}

.date-input {
  flex: 1;
  min-width: 0;
  padding: 0;
  border: 0;
  outline: 0;
  background: none;
  color: #757575;
  font: inherit;
  font-size: 28px;
}

.calendar {
  width: 38px;
  height: 42px;
}

/* Body */
.body {
  display: flex;
  flex: 1;
  min-height: 0;
  overflow-y: auto;
  scrollbar-width: none;
}

.sidebar {
  flex: 0 0 224px;
}

.side-item {
  display: flex;
  flex-direction: column;
  align-items: center;
  gap: 4px;
  height: 212px;
  padding: 56px 3px 0 0;
  background: #ebebeb;
  color: #333;
  font-size: 26px;
  font-weight: 500;
  line-height: 30px;
}

.side-active {
  background: #fff;
  color: #0099fa;
}

.side-icon {
  width: 60px;
  height: 60px;
  fill: currentColor;
}

.content {
  flex: 1;
  min-width: 0;
  padding: 50px 132px 0 140px;
}

.card {
  padding: 32px;
  box-shadow: 0 1px 4px rgba(0, 0, 0, 0.35);
}

.tiles {
  display: flex;
  gap: 70px;
}

.tile {
  display: flex;
  flex: 0 1 338px;
  flex-direction: column;
  align-items: center;
  height: 248px;
  padding-top: 36px;
  box-shadow: 0 2px 6px rgba(0, 0, 0, 0.4);
  color: #fff;
}

.tile-scope {
  justify-content: center;
  padding-top: 0;
  padding-bottom: 8px;
  color: #424242;
  font-size: 32px;
}

.tile-impressions {
  background: #fc1654;
}

.tile-conversions {
  background: #fc98b8;
}

.tile-rate {
  background: #f94073;
}

.tile-label {
  font-size: 28px;
  line-height: 32px;
}

.tile-value {
  margin-top: 34px;
  font-size: 72px;
  line-height: 84px;
}

/* Map */
.map {
  display: block;
  width: 100%;
  max-width: 1296px;
  margin: 48px auto 0;
}

.map path {
  fill: #f5f5f5;
  stroke: #ddd;
  stroke-width: 2;
  stroke-linejoin: miter;
  vector-effect: non-scaling-stroke;
}

.map .sea {
  fill: #fff;
}

.map .rough {
  fill: none;
}

.map .dot {
  fill: #ddd;
}

.map .visited {
  fill: #efe6dc;
  stroke: #dccfc3;
}

.map .dot-visited {
  fill: #dccfc3;
  stroke: #dccfc3;
}

.map .top-country {
  fill: #fc1654;
  stroke: #e3134c;
}

/* Floating layer */
.bottom-fade {
  position: fixed;
  right: 0;
  bottom: 0;
  left: 0;
  height: 90px;
  background: linear-gradient(to bottom, rgba(0, 0, 0, 0), rgba(0, 0, 0, 0.07));
  -webkit-mask-image: linear-gradient(to right, rgba(0, 0, 0, 0.3), #000 80px, #000 90%, rgba(0, 0, 0, 0.3));
  mask-image: linear-gradient(to right, rgba(0, 0, 0, 0.3), #000 80px, #000 90%, rgba(0, 0, 0, 0.3));
  pointer-events: none;
}

.chat {
  position: fixed;
  right: 32px;
  bottom: 28px;
  width: 120px;
  height: 120px;
  padding: 0;
  border: 0;
  border-radius: 50%;
  background: #0071b2;
  box-shadow: 0 4px 40px rgba(0, 0, 0, 0.2);
}

.chat svg {
  display: block;
  width: 120px;
  height: 120px;
}
```
